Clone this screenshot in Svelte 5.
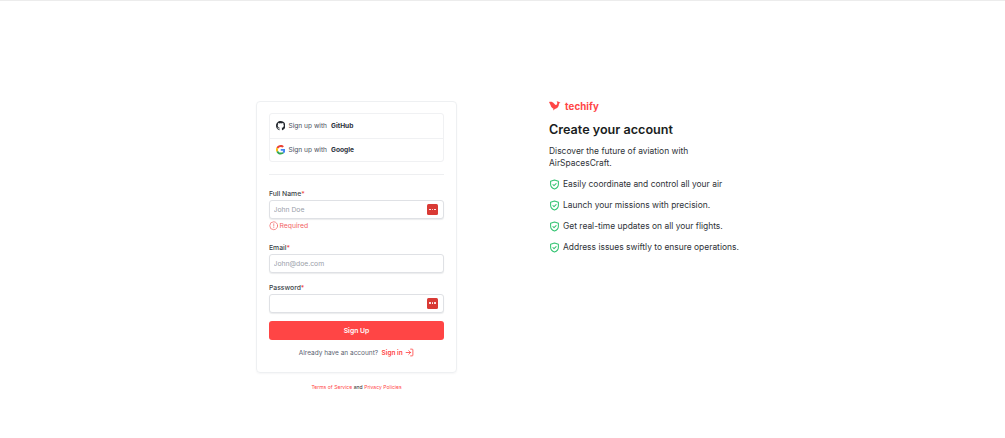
<script lang="ts">
  const features = [
    "Easily coordinate and control all your air",
    "Launch your missions with precision.",
    "Get real-time updates on all your flights.",
    "Address issues swiftly to ensure operations.",
  ];
</script>

<div class="topline"></div>
<main class="page">
  <div class="left">
    <section class="card">
      <div class="socials">
        <button type="button" class="social">
          <svg viewBox="0 0 16 16" width="9.500" height="9.500" aria-hidden="true">
            <path fill="#24292f" d="M8 0C3.58 0 0 3.58 0 8c0 3.54 2.29 6.53 5.47 7.59.4.07.55-.17.55-.38 0-.19-.01-.82-.01-1.49-2.01.37-2.53-.49-2.69-.94-.09-.23-.48-.94-.82-1.13-.28-.15-.68-.52-.01-.53.63-.01 1.08.58 1.23.82.72 1.21 1.87.87 2.33.66.07-.52.28-.87.51-1.07-1.78-.2-3.64-.89-3.64-3.95 0-.87.31-1.59.82-2.15-.08-.2-.36-1.02.08-2.12 0 0 .67-.21 2.2.82.64-.18 1.32-.27 2-.27s1.36.09 2 .27c1.53-1.04 2.2-.82 2.2-.82.44 1.1.16 1.92.08 2.12.51.56.82 1.27.82 2.15 0 3.07-1.87 3.75-3.65 3.95.29.25.54.73.54 1.48 0 1.07-.01 1.93-.01 2.2 0 .21.15.46.55.38A8.01 8.01 0 0 0 16 8c0-4.42-3.58-8-8-8z"/>
          </svg>
          <span class="social__text">Sign up with</span>
          <strong>GitHub</strong>
        </button>
        <button type="button" class="social">
          <svg viewBox="0 0 48 48" width="9.500" height="9.500" aria-hidden="true">
            <path fill="#EA4335" d="M24 9.500c3.500 0 6.700 1.200 9.200 3.600l6.900-6.900C35.900 2.400 30.500 0 24 0 14.600 0 6.500 5.400 2.600 13.200l8 6.200C12.500 13.700 17.800 9.500 24 9.500z"/>
            <path fill="#4285F4" d="M46.900 24.500c0-1.600-.1-3.100-.4-4.500H24v9h12.900c-.6 3-2.200 5.500-4.700 7.200l7.700 6c4.500-4.200 7-10.300 7-17.700z"/>
            <path fill="#FBBC05" d="M10.500 28.600c-.5-1.400-.8-3-.8-4.600s.3-3.200.8-4.600l-8-6.200C.9 16.400 0 20.100 0 24s.9 7.600 2.600 10.800l7.900-6.200z"/>
            <path fill="#34A853" d="M24 48c6.500 0 11.900-2.100 15.900-5.800l-7.700-6c-2.200 1.500-4.900 2.300-8.200 2.300-6.200 0-11.500-4.200-13.400-9.900l-8 6.200C6.500 42.600 14.600 48 24 48z"/>
          </svg>
          <span class="social__text">Sign up with</span>
          <strong>Google</strong>
        </button>
      </div>

      <hr class="divider" />

      <form class="form" onsubmit={(event) => event.preventDefault()}>
        <div class="field field--name">
          <label for="name">Full Name<span class="req">*</span></label>
          <div class="input-wrap">
            <input id="name" type="text" placeholder="John Doe" />
            <span class="dots"><i></i><i></i><i></i></span>
          </div>
          <p class="error">
            <svg viewBox="0 0 24 24" width="9.500" height="9.500" fill="none" stroke="#f26464" stroke-width="1.800" stroke-linecap="round" aria-hidden="true">
              <circle cx="12" cy="12" r="10"/>
              <path d="M12 7v6M12 16.500v.5"/>
            </svg>
            Required
          </p>
        </div>

        <div class="field field--email">
          <label for="email">Email<span class="req">*</span></label>
          <div class="input-wrap">
            <input id="email" type="text" placeholder="John@doe.com" />
          </div>
        </div>

        <div class="field field--password">
          <label for="password">Password<span class="req">*</span></label>
          <div class="input-wrap">
            <input id="password" type="password" />
            <span class="dots"><i></i><i></i><i></i></span>
          </div>
        </div>

        <button type="submit" class="submit">Sign Up</button>
      </form>

      <p class="signin">
        Already have an account?
        <a href="#signin">
          Sign in
          <svg viewBox="0 0 24 24" width="9" height="9" fill="none" stroke="#ff4545" stroke-width="2.200" stroke-linecap="round" stroke-linejoin="round" aria-hidden="true">
            <path d="M15 3h4a2 2 0 0 1 2 2v14a2 2 0 0 1-2 2h-4M3 12h12M10 7l5 5-5 5"/>
          </svg>
        </a>
      </p>
    </section>

    <p class="legal">
      <a href="#terms">Terms of Service</a> and <a href="#privacy">Privacy Policies</a>
    </p>
  </div>

  <aside class="intro">
    <div class="brand">
      <svg viewBox="0 0 24 20" width="12" height="10" aria-hidden="true">
        <path fill="#ff4545" d="M0 2c4-1 8 0 10 3l3 3 3-1c1-3 .5-5-1-6.500 4 0 7 3 8 3l-3 1.500c0 6-3 10-8 11l-4 3 1-3.500C7 15 4 12 3 8z"/>
      </svg>
      <span>techify</span>
    </div>
    <h1>Create your account</h1>
    <p class="lead">Discover the future of aviation with AirSpacesCraft.</p>
    <ul class="features">
      {#each features as feature}
        <li>
          <svg viewBox="0 0 24 24" width="11" height="11" fill="none" stroke="#35c473" stroke-width="2.300" stroke-linecap="round" stroke-linejoin="round" aria-hidden="true">
            <path d="M12 2l8.500 3v6.500c0 5-3.500 8.700-8.500 10.500-5-1.800-8.500-5.500-8.500-10.500V5z"/>
            <path d="M8.500 12l2.500 2.500 4.500-4.500"/>
          </svg>
          {feature}
        </li>
      {/each}
    </ul>
  </aside>
</main>

<style>
  :global(body) {
    background: #fff;
    font-family: Inter, "Liberation Sans", sans-serif;
    color: #1f2328;
  }

  .topline {
    height: 1px;
    background: #ececec;
  }

  .page {
    display: flex;
    justify-content: center;
    align-items: flex-start;
    gap: 92px;
    padding-top: 100px;
  }

  .left {
    width: 201px;
  }

  .card {
    box-sizing: border-box;
    border: 1px solid #eef0f2;
    border-radius: 4px;
    padding: 11px 12px 12px;
    height: 272px;
    box-shadow: 0 1px 2px rgba(16, 24, 40, 0.04);
  }

  .socials {
    border: 1px solid #f0f1f3;
    border-radius: 3px;
  }

  .social {
    display: flex;
    align-items: center;
    gap: 3.500px;
    width: 100%;
    height: 23.500px;
    padding: 0 5.500px;
    background: none;
    border: none;
    font: inherit;
    font-size: 6.600px;
    color: #2a2f3a;
  }

  .social + .social {
    border-top: 1px solid #f0f1f3;
  }

  .social__text {
    color: #4a505c;
    margin-right: 0.500px;
  }

  .social strong {
    font-weight: 700;
  }

  .divider {
    border: none;
    border-top: 1px solid #eeeff1;
    margin: 12px 0 14px;
  }

  .form {
    display: flex;
    flex-direction: column;
  }

  label {
    display: block;
    font-size: 6.800px;
    font-weight: 500;
    line-height: 9px;
    margin-bottom: 2px;
    color: #3a3f47;
  }

  .req {
    color: #f04747;
  }

  .input-wrap {
    position: relative;
  }

  input {
    box-sizing: border-box;
    display: block;
    width: 100%;
    height: 19px;
    padding: 0 3.500px;
    border: 1px solid #dfe1e5;
    border-radius: 3px;
    background: #fff;
    box-shadow: 0 1px 1px rgba(16, 24, 40, 0.08);
    font: inherit;
    font-size: 6.800px;
    outline: none;
  }

  input::placeholder {
    color: #9aa0aa;
  }

  .dots {
    position: absolute;
    top: 4px;
    right: 6px;
    width: 11.500px;
    height: 11px;
    border-radius: 1.500px;
    background: #d93a35;
    display: flex;
    align-items: center;
    justify-content: center;
    gap: 1px;
  }

  .dots i {
    width: 1.500px;
    height: 1.500px;
    border-radius: 50%;
    background: #fff;
  }

  .error {
    display: flex;
    align-items: center;
    gap: 1.500px;
    margin: 2px 0 0 -0.500px;
    font-size: 6.800px;
    line-height: 10px;
    color: #f26464;
  }

  .field--email {
    margin-top: 12px;
  }

  .field--password {
    margin-top: 9.500px;
  }

  .submit {
    margin-top: 8px;
    height: 19px;
    border: none;
    border-radius: 3px;
    background: #ff4545;
    color: #fff;
    font: inherit;
    font-size: 6.800px;
    font-weight: 600;
  }

  .signin {
    margin: 8px 0 0;
    text-align: center;
    font-size: 6.500px;
    line-height: 10px;
    color: #5b6270;
  }

  .signin a {
    display: inline-flex;
    align-items: center;
    gap: 2.500px;
    margin-left: 1.500px;
    color: #ff4545;
    font-weight: 600;
    text-decoration: none;
    vertical-align: top;
  }

  .legal {
    margin: 10px 0 0;
    text-align: center;
    font-size: 5px;
    line-height: 8px;
    word-spacing: 0.200px;
    color: #1f2328;
  }

  .legal a {
    color: #ff4545;
    text-decoration: none;
  }

  .intro {
    width: 200px;
  }

  .brand {
    display: flex;
    align-items: center;
    gap: 4px;
    height: 10px;
    color: #ff4545;
    font-size: 9.700px;
    font-weight: 700;
    letter-spacing: 0.1px;
  }

  h1 {
    margin: 11px 0 0;
    font-size: 12.600px;
    line-height: 16px;
    font-weight: 600;
    color: #1a1d21;
  }

  .lead {
    margin: 7px 0 0;
    font-size: 8.450px;
    line-height: 12px;
    color: #2f3338;
  }

  .features {
    list-style: none;
    margin: 9px 0 0;
    padding: 0;
    display: flex;
    flex-direction: column;
    gap: 9px;
  }

  .features li {
    display: flex;
    align-items: center;
    gap: 3px;
    height: 12px;
    font-size: 8.450px;
    color: #2f3338;
    white-space: nowrap;
  }
</style>
